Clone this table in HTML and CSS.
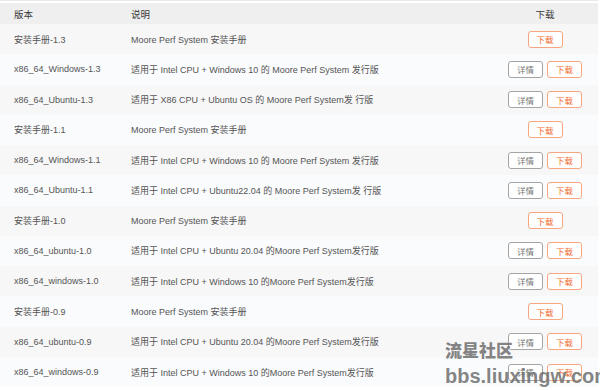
FILE: index.html
```html
<!DOCTYPE html>
<html lang="zh-CN">
<head>
<meta charset="utf-8">
<title>下载</title>
<link rel="stylesheet" href="styles.css">
</head>
<body>
<div class="page">
  <div class="table">
    <div class="row head">
      <div class="cell c1">版本</div>
      <div class="cell c2">说明</div>
      <div class="cell c3">下载</div>
    </div>
    <div class="row odd">
      <div class="cell c1">安装手册-1.3</div>
      <div class="cell c2">Moore Perf System 安装手册</div>
      <div class="cell c3"><span class="btn dl">下载</span></div>
    </div>
    <div class="row even">
      <div class="cell c1">x86_64_Windows-1.3</div>
      <div class="cell c2">适用于 Intel CPU + Windows 10 的 Moore Perf System 发行版</div>
      <div class="cell c3"><span class="btn info">详情</span><span class="btn dl">下载</span></div>
    </div>
    <div class="row odd">
      <div class="cell c1">x86_64_Ubuntu-1.3</div>
      <div class="cell c2">适用于 X86 CPU + Ubuntu OS 的 Moore Perf System发 行版</div>
      <div class="cell c3"><span class="btn info">详情</span><span class="btn dl">下载</span></div>
    </div>
    <div class="row even">
      <div class="cell c1">安装手册-1.1</div>
      <div class="cell c2">Moore Perf System 安装手册</div>
      <div class="cell c3"><span class="btn dl">下载</span></div>
    </div>
    <div class="row odd">
      <div class="cell c1">x86_64_Windows-1.1</div>
      <div class="cell c2">适用于 Intel CPU + Windows 10 的 Moore Perf System 发行版</div>
      <div class="cell c3"><span class="btn info">详情</span><span class="btn dl">下载</span></div>
    </div>
    <div class="row even">
      <div class="cell c1">x86_64_Ubuntu-1.1</div>
      <div class="cell c2">适用于 Intel CPU + Ubuntu22.04 的 Moore Perf System发 行版</div>
      <div class="cell c3"><span class="btn info">详情</span><span class="btn dl">下载</span></div>
    </div>
    <div class="row odd">
      <div class="cell c1">安装手册-1.0</div>
      <div class="cell c2">Moore Perf System 安装手册</div>
      <div class="cell c3"><span class="btn dl">下载</span></div>
    </div>
    <div class="row even">
      <div class="cell c1">x86_64_ubuntu-1.0</div>
      <div class="cell c2">适用于 Intel CPU + Ubuntu 20.04 的Moore Perf System发行版</div>
      <div class="cell c3"><span class="btn info">详情</span><span class="btn dl">下载</span></div>
    </div>
    <div class="row odd">
      <div class="cell c1">x86_64_windows-1.0</div>
      <div class="cell c2">适用于 Intel CPU + Windows 10 的Moore Perf System发行版</div>
      <div class="cell c3"><span class="btn info">详情</span><span class="btn dl">下载</span></div>
    </div>
    <div class="row even">
      <div class="cell c1">安装手册-0.9</div>
      <div class="cell c2">Moore Perf System 安装手册</div>
      <div class="cell c3"><span class="btn dl">下载</span></div>
    </div>
    <div class="row odd">
      <div class="cell c1">x86_64_ubuntu-0.9</div>
      <div class="cell c2">适用于 Intel CPU + Ubuntu 20.04 的Moore Perf System发行版</div>
      <div class="cell c3"><span class="btn info">详情</span><span class="btn dl">下载</span></div>
    </div>
    <div class="row even">
      <div class="cell c1">x86_64_windows-0.9</div>
      <div class="cell c2">适用于 Intel CPU + Windows 10 的Moore Perf System发行版</div>
      <div class="cell c3"><span class="btn info">详情</span><span class="btn dl">下载</span></div>
    </div>
  </div>
  <div class="watermark">
    <div class="wm-cn">流星社区</div>
    <div class="wm-url">bbs.liuxingw.com</div>
  </div>
</div>
</body>
</html>
```
FILE: styles.css
```css
html, body {
  margin: 0;
  padding: 0;
  background: #ffffff;
}
body {
  font-family: "Liberation Sans", Arial, "Noto Sans CJK SC", sans-serif;
  font-size: 9px;
  color: #555555;
  overflow: hidden;
}
.page {
  position: relative;
  width: 600px;
  height: 390px;
  overflow: hidden;
}
.table {
  width: 598px;
  border-top: 1px solid #e9e9e9;
  padding-top: 2px;
}
.row {
  display: grid;
  grid-template-columns: 117px 375px 106px;
  height: 30.27px;
  align-items: center;
}
.row.head {
  height: 21px;
  background: #efeff0;
  color: #3a3a3a;
  font-size: 9.5px;
}
.row.odd {
  background: #f7f7f8;
}
.row.even {
  background: #fafbfd;
}
.cell {
  white-space: nowrap;
}
.c1 {
  padding-left: 14px;
}
.c2 {
  padding-left: 14px;
}
.c3 {
  display: flex;
  justify-content: center;
  gap: 4px;
}
.head .c3 {
  padding-left: 0;
}
.btn {
  box-sizing: border-box;
  width: 35px;
  height: 17px;
  border-radius: 3px;
  display: flex;
  align-items: center;
  justify-content: center;
  font-size: 8.5px;
  background: #ffffff;
}
.btn.dl {
  border: 1px solid #f7a67f;
  color: #f26a2c;
}
.btn.info {
  border: 1px solid #a5a5a5;
  color: #777777;
}
.watermark {
  position: absolute;
  left: 445px;
  top: 341px;
  font-family: "Liberation Sans", "Noto Sans CJK SC", sans-serif;
  font-weight: bold;
  color: rgba(110, 110, 110, 0.85);
  line-height: 1;
  pointer-events: none;
}
.wm-cn {
  font-family: "Noto Sans CJK SC", sans-serif;
  font-size: 17px;
  font-weight: 900;
  letter-spacing: 0px;
}
.wm-url {
  margin-top: 8px;
  font-size: 20px;
}
```
